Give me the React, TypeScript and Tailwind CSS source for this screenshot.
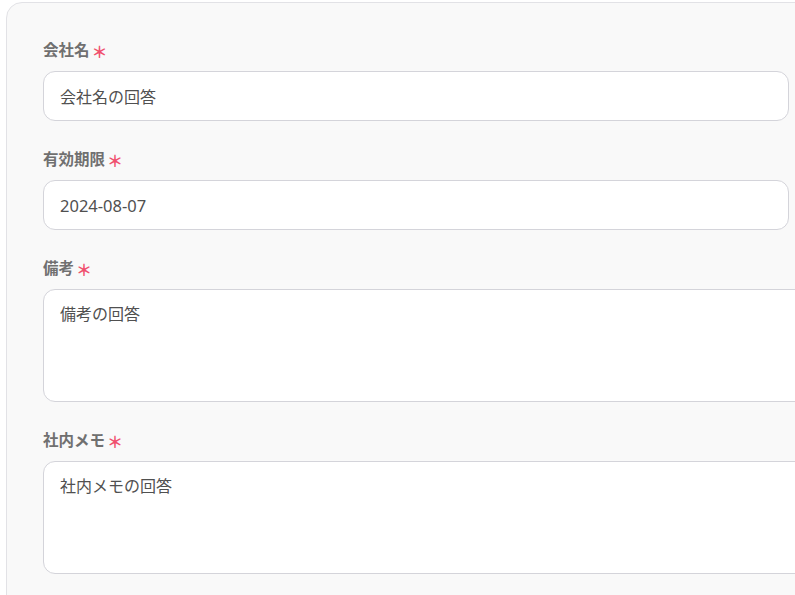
import React from "react";

function Label({ text }: { text: string }) {
  return (
    <div className="flex items-center gap-[2px] h-[20px] text-[15.5px] font-bold text-[#707070] leading-none">
      <span>{text}</span>
      <span className="text-[#f0506e] text-[16px] font-bold leading-none font-['Noto_Sans_CJK_JP',sans-serif]">
        ＊
      </span>
    </div>
  );
}

const inputCls =
  "mt-[10px] w-[746px] h-[50px] rounded-[12px] border border-[#d4d4da] bg-white px-[16px] text-[#505050] outline-none";
const areaCls =
  "mt-[10px] w-[790px] h-[113px] rounded-[12px] border border-[#d4d4da] bg-white px-[16px] py-[12px] text-[16px] text-[#505050] outline-none resize-none";

export default function App() {
  return (
    <div className="w-[795px] h-[595px] overflow-hidden bg-white font-['Noto_Sans','Noto_Sans_CJK_JP',sans-serif]">
      <div className="ml-[6px] mt-[2px] w-[840px] h-[700px] rounded-[16px] border border-[#e2e2e6] bg-[#f9f9f9] pl-[36px] pt-[38px] flex flex-col">
        <Label text="会社名" />
        <input readOnly value="会社名の回答" className={inputCls + " text-[16px]"} />
        <div className="mt-[29px]">
          <Label text="有効期限" />
        </div>
        <input readOnly value="2024-08-07" className={inputCls + " text-[16.5px]"} />
        <div className="mt-[29px]">
          <Label text="備考" />
        </div>
        <textarea readOnly value="備考の回答" className={areaCls} />
        <div className="mt-[29px]">
          <Label text="社内メモ" />
        </div>
        <textarea readOnly value="社内メモの回答" className={areaCls} />
      </div>
    </div>
  );
}
